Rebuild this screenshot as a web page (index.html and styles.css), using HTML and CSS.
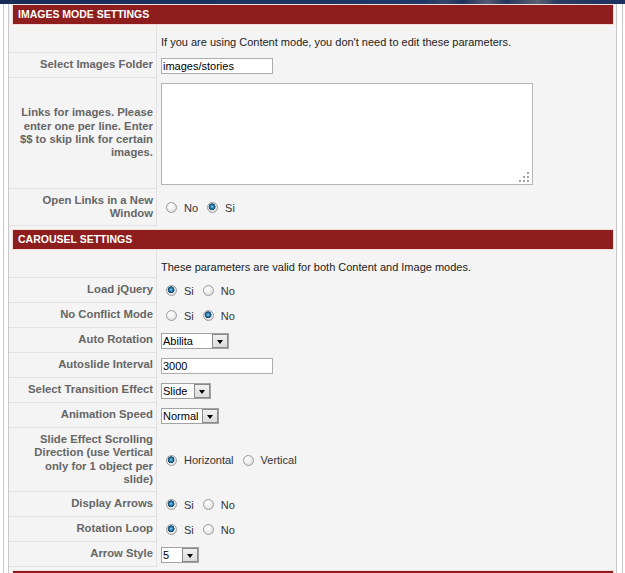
FILE: index.html
```html
<!DOCTYPE html>
<html>
<head>
<meta charset="utf-8">
<title>Parameters</title>
<link rel="stylesheet" href="styles.css">
</head>
<body>
<div class="topbar"></div>
<div class="frame">
  <div class="panel">
    <h3 class="pane-title">IMAGES MODE SETTINGS</h3>
    <div class="params">
      <div class="row r-desc">
        <div class="key"></div>
        <div class="val note">If you are using Content mode, you don't need to edit these parameters.</div>
      </div>
      <div class="row">
        <div class="key">Select Images Folder</div>
        <div class="val"><input class="text" type="text" value="images/stories"></div>
      </div>
      <div class="row r-area">
        <div class="key">Links for images. Please enter one per line. Enter $$ to skip link for certain images.</div>
        <div class="val">
          <div class="area-wrap">
            <textarea class="area"></textarea>
            <svg class="grip" width="10" height="10" viewBox="0 0 10 10">
              <rect x="8" y="0" width="2" height="2" fill="#a3a3a3"/>
              <rect x="4" y="4" width="2" height="2" fill="#a3a3a3"/>
              <rect x="8" y="4" width="2" height="2" fill="#a3a3a3"/>
              <rect x="0" y="8" width="2" height="2" fill="#a3a3a3"/>
              <rect x="4" y="8" width="2" height="2" fill="#a3a3a3"/>
              <rect x="8" y="8" width="2" height="2" fill="#a3a3a3"/>
            </svg>
          </div>
        </div>
      </div>
      <div class="row r-two">
        <div class="key">Open Links in a New Window</div>
        <div class="val">
          <label class="opt"><input class="radio" type="radio" name="newwin">No</label>
          <label class="opt"><input class="radio" type="radio" name="newwin" checked>Si</label>
        </div>
      </div>
    </div>

    <h3 class="pane-title">CAROUSEL SETTINGS</h3>
    <div class="params">
      <div class="row r-desc">
        <div class="key"></div>
        <div class="val note">These parameters are valid for both Content and Image modes.</div>
      </div>
      <div class="row">
        <div class="key">Load jQuery</div>
        <div class="val">
          <label class="opt"><input class="radio" type="radio" name="jq" checked>Si</label>
          <label class="opt"><input class="radio" type="radio" name="jq">No</label>
        </div>
      </div>
      <div class="row">
        <div class="key">No Conflict Mode</div>
        <div class="val">
          <label class="opt"><input class="radio" type="radio" name="nc">Si</label>
          <label class="opt"><input class="radio" type="radio" name="nc" checked>No</label>
        </div>
      </div>
      <div class="row">
        <div class="key">Auto Rotation</div>
        <div class="val"><div class="select w-abilita"><span class="txt">Abilita</span><span class="btn"></span></div></div>
      </div>
      <div class="row">
        <div class="key">Autoslide Interval</div>
        <div class="val"><input class="text" type="text" value="3000"></div>
      </div>
      <div class="row">
        <div class="key">Select Transition Effect</div>
        <div class="val"><div class="select w-slide"><span class="txt">Slide</span><span class="btn"></span></div></div>
      </div>
      <div class="row">
        <div class="key">Animation Speed</div>
        <div class="val"><div class="select w-normal"><span class="txt">Normal</span><span class="btn"></span></div></div>
      </div>
      <div class="row r-four">
        <div class="key">Slide Effect Scrolling Direction (use Vertical only for 1 object per slide)</div>
        <div class="val">
          <label class="opt"><input class="radio" type="radio" name="dir" checked>Horizontal</label>
          <label class="opt"><input class="radio" type="radio" name="dir">Vertical</label>
        </div>
      </div>
      <div class="row">
        <div class="key">Display Arrows</div>
        <div class="val">
          <label class="opt"><input class="radio" type="radio" name="arr" checked>Si</label>
          <label class="opt"><input class="radio" type="radio" name="arr">No</label>
        </div>
      </div>
      <div class="row">
        <div class="key">Rotation Loop</div>
        <div class="val">
          <label class="opt"><input class="radio" type="radio" name="loop" checked>Si</label>
          <label class="opt"><input class="radio" type="radio" name="loop">No</label>
        </div>
      </div>
      <div class="row">
        <div class="key">Arrow Style</div>
        <div class="val"><div class="select w-five"><span class="txt">5</span><span class="btn"></span></div></div>
      </div>
    </div>

    <div class="pane-title"></div>
  </div>
</div>
</body>
</html>
```

FILE: styles.css
```css
* {
  box-sizing: border-box;
}

html, body {
  margin: 0;
  background: #ffffff;
  font-family: "Liberation Sans", Arial, sans-serif;
  font-size: 11px;
  color: #333333;
  overflow: hidden;
}

.topbar {
  height: 4px;
  background: linear-gradient(90deg, #172c57 0%, #1b3463 40%, #20386a 68%, #34466c 71%, #1d335f 74%, #565d70 78%, #22375f 81%, #5d6274 86%, #2a3d63 89%, #1a3160 100%);
}

.frame {
  margin: 0 2px 0 3px;
  padding: 0 5px 0 4px;
  border-left: 1px solid #c8c8c8;
  border-right: 1px solid #c8c8c8;
  min-height: 569px;
}

.panel {
  border-left: 1px solid #c8c8c8;
  border-right: 1px solid #c8c8c8;
  background: #f4f4f4;
  min-height: 569px;
}

.pane-title {
  margin: 0 2px 0 3px;
  height: 21px;
  border: 1px solid #f1dcd7;
  background: #8d1e1d;
  color: #ffffff;
  font-size: 10.5px;
  font-weight: bold;
  line-height: 19px;
  padding-left: 5px;
}

.params {
  padding-bottom: 3px;
}

.row {
  display: flex;
  height: 25px;
}

.r-desc { height: 28px; }
.r-area { height: 111px; }
.r-two { height: 37px; }
.r-four { height: 64px; }

.key {
  flex: none;
  width: 148px;
  display: flex;
  align-items: center;
  justify-content: flex-end;
  text-align: right;
  padding: 0 3px 0 8px;
  border-right: 1px solid #e2e2e2;
  border-bottom: 1px solid #e2e2e2;
  font-weight: bold;
  font-size: 11.3px;
  color: #666666;
  line-height: 13.4px;
}

.val {
  flex: 1;
  display: flex;
  align-items: center;
  padding-left: 4px;
}

.note {
  align-items: flex-start;
  padding-top: 11px;
  color: #222222;
}

.opt {
  display: flex;
  align-items: center;
  color: #333333;
}

.radio {
  appearance: none;
  -webkit-appearance: none;
  width: 11px;
  height: 11px;
  margin: 0 7px 0 5px;
  border-radius: 50%;
  border: 1px solid #9c9c9c;
  background: radial-gradient(circle at 38% 32%, #ffffff 0, #f4f4f4 35%, #d2d2d2 100%);
}

.opt + .opt .radio {
  margin-left: 9px;
}

.radio:checked {
  background:
    radial-gradient(circle at 45% 42%, #a6e0f2 0, #3186b6 1.4px, #0f466d 3.2px, rgba(15, 70, 109, 0) 3.7px),
    radial-gradient(circle at 38% 32%, #ffffff 0, #f4f4f4 35%, #d2d2d2 100%);
}

.text {
  width: 112px;
  height: 16px;
  border: 1px solid #adadad;
  padding: 0 1px;
  margin: 0;
  font: 11px "Liberation Sans", Arial, sans-serif;
  color: #000000;
  background: #ffffff;
}

.area-wrap {
  position: relative;
  width: 372px;
  height: 102px;
}

.area {
  display: block;
  width: 100%;
  height: 100%;
  margin: 0;
  border: 1px solid #b4b4b4;
  background: #ffffff;
  resize: none;
}

.grip {
  position: absolute;
  right: 4px;
  bottom: 3px;
}

.select {
  display: inline-flex;
  height: 16px;
  border: 1px solid #a2a2a2;
  background: #ffffff;
  color: #000000;
}

.select .txt {
  flex: 1;
  padding-left: 1px;
  line-height: 14px;
}

.select .btn {
  flex: none;
  width: 16px;
  border: 1px solid #8a8a8a;
  background: linear-gradient(#f0f0f0, #dcdcdc);
  display: flex;
  justify-content: center;
  align-items: center;
}

.select .btn::after {
  content: "";
  border-left: 3.5px solid transparent;
  border-right: 3.5px solid transparent;
  border-top: 4px solid #000000;
  margin-top: 3px;
}

.w-abilita { width: 68px; }
.w-slide { width: 50px; }
.w-normal { width: 58px; }
.w-five { width: 38px; }
```
